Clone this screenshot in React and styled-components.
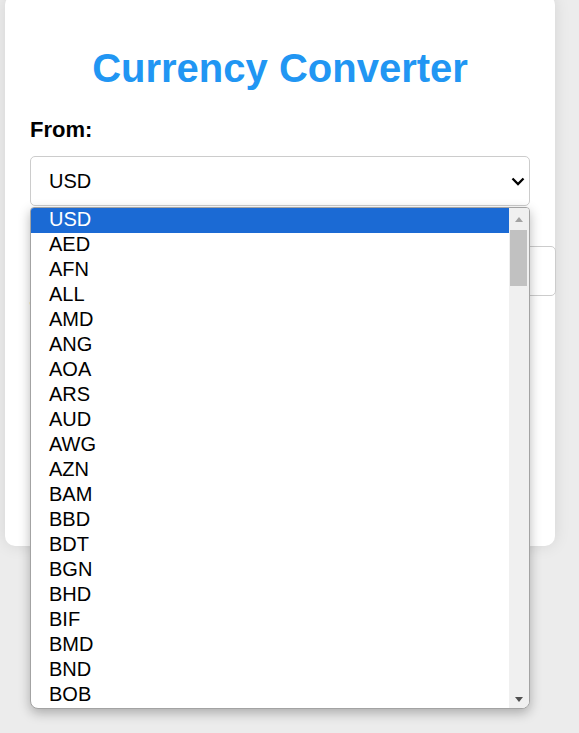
import React from 'react';
import styled, { createGlobalStyle } from 'styled-components';

const Global = createGlobalStyle`
  html, body {
    margin: 0;
    padding: 0;
    background: #ececec;
    font-family: "Liberation Sans", Arial, sans-serif;
  }
  body {
    height: 733px;
    overflow: hidden;
  }
`;

const Page = styled.div`
  padding-left: 5px;
  margin-top: -5px;
`;

const Card = styled.div`
  position: relative;
  width: 550px;
  box-sizing: border-box;
  padding: 25px;
  background: #ffffff;
  border-radius: 10px;
  box-shadow: 0 0 16px rgba(0, 0, 0, 0.1);
`;

const Title = styled.h1`
  margin: 25px 0 27px;
  font-size: 40px;
  line-height: 46px;
  font-weight: bold;
  color: #2196f3;
  text-align: center;
`;

const Field = styled.div`
  display: flex;
  flex-direction: column;
  margin-bottom: 2px;
`;

const Label = styled.label`
  display: block;
  font-size: 22px;
  line-height: 24px;
  font-weight: bold;
  color: #000;
  margin-bottom: 14px;
`;

const SelectWrap = styled.div`
  position: relative;
  width: 100%;
`;

const Select = styled.select`
  appearance: none;
  -webkit-appearance: none;
  width: 100%;
  height: 50px;
  box-sizing: border-box;
  padding: 0 36px 0 18px;
  font-family: "Liberation Sans", Arial, sans-serif;
  font-size: 20px;
  color: #000;
  background: #fff;
  border: 1px solid #ccc;
  border-radius: 5px;
`;

const Chevron = styled.svg`
  position: absolute;
  right: 5px;
  top: 21px;
  width: 14px;
  height: 9px;
  pointer-events: none;
`;

const Input = styled.input`
  width: 100%;
  height: 24px;
  padding: 12px;
  font-family: "Liberation Sans", Arial, sans-serif;
  font-size: 20px;
  border: 1px solid #ccc;
  border-radius: 5px;
  background: #fff;
`;

const Button = styled.button`
  width: 100%;
  height: 40px;
  margin-top: 14px;
  border: none;
  border-radius: 5px;
  background: #2196f3;
  color: #fff;
  font-family: "Liberation Sans", Arial, sans-serif;
  font-size: 20px;
`;

const Result = styled.div`
  margin-top: 30px;
  padding: 12px;
  border: 1px solid #ddd;
  border-radius: 5px;
  background: #f9f9f9;
  font-size: 20px;
  line-height: 23px;
  text-align: center;
`;

const ListBox = styled.div`
  position: absolute;
  top: 51px;
  left: 0;
  width: 500px;
  height: 502px;
  box-sizing: border-box;
  display: flex;
  background: #fff;
  border: 1px solid #a3a3a3;
  border-radius: 4px 4px 8px 8px;
  overflow: hidden;
  box-shadow: 0 4px 12px rgba(0, 0, 0, 0.28);
  z-index: 10;
`;

const Options = styled.ul`
  flex: 1;
  margin: 0;
  padding: 0;
  list-style: none;
`;

const Option = styled.li`
  height: 25px;
  box-sizing: border-box;
  padding: 0 0 3px 18px;
  font-size: 20px;
  line-height: 22px;
  color: ${(p) => (p.$selected ? '#ffffff' : '#000000')};
  background: ${(p) => (p.$selected ? '#1b6ad4' : 'transparent')};
`;

const Track = styled.div`
  width: 20px;
  display: flex;
  flex-direction: column;
  align-items: center;
  background: #f0f0f0;
`;

const ArrowZone = styled.div`
  height: ${(p) => p.$h}px;
  width: 100%;
  display: flex;
  align-items: ${(p) => (p.$down ? 'flex-start' : 'center')};
  justify-content: center;
  padding-top: ${(p) => (p.$down ? 6 : 0)}px;
  box-sizing: border-box;
`;

const Triangle = styled.span`
  width: 0;
  height: 0;
  margin-left: -1px;
  border-left: 4.5px solid transparent;
  border-right: 4.5px solid transparent;
  ${(p) =>
    p.$down
      ? `border-top: 5px solid ${p.$color};`
      : `border-bottom: 5px solid ${p.$color};`}
`;

const Thumb = styled.div`
  width: 17px;
  height: 56px;
  margin-left: -2px;
  background: #c1c1c1;
`;

const Spacer = styled.div`
  flex: 1;
`;

const CURRENCIES = [
  'USD', 'AED', 'AFN', 'ALL', 'AMD', 'ANG', 'AOA', 'ARS', 'AUD', 'AWG',
  'AZN', 'BAM', 'BBD', 'BDT', 'BGN', 'BHD', 'BIF', 'BMD', 'BND', 'BOB',
  'BRL', 'BSD', 'BTN', 'BWP', 'BYN', 'BZD', 'CAD', 'CDF', 'CHF', 'CLP',
  'CNY', 'COP', 'CRC', 'CUP', 'CVE', 'CZK', 'DJF', 'DKK', 'DOP', 'DZD',
  'EGP', 'ERN', 'ETB', 'EUR', 'FJD', 'GBP', 'INR', 'JPY', 'KRW', 'MXN',
];

const VISIBLE = CURRENCIES.slice(0, 20);

function CurrencySelect({ value, children }) {
  return (
    <SelectWrap>
      <Select defaultValue={value}>
        {CURRENCIES.map((c) => (
          <option key={c} value={c}>{c}</option>
        ))}
      </Select>
      <Chevron viewBox="0 0 14 9">
        <path d="M1.5 1.5 L7 7 L12.5 1.5" fill="none" stroke="#000" strokeWidth="2.3" />
      </Chevron>
      {children}
    </SelectWrap>
  );
}

export default function App() {
  return (
    <>
      <Global />
      <Page>
        <Card>
          <Title>Currency Converter</Title>
          <Field>
            <Label>From:</Label>
            <CurrencySelect value="USD">
              <ListBox>
                <Options>
                  {VISIBLE.map((c, i) => (
                    <Option key={c} $selected={i === 0}>{c}</Option>
                  ))}
                </Options>
                <Track>
                  <ArrowZone $h={22}>
                    <Triangle $color="#a3a3a3" />
                  </ArrowZone>
                  <Thumb />
                  <Spacer />
                  <ArrowZone $h={17} $down>
                    <Triangle $down $color="#505050" />
                  </ArrowZone>
                </Track>
              </ListBox>
            </CurrencySelect>
          </Field>
          <Field>
            <Label>Amount:</Label>
            <Input type="number" defaultValue="1" />
          </Field>
          <Field>
            <Label>To:</Label>
            <CurrencySelect value="EUR" />
          </Field>
          <Button>Convert</Button>
          <Result>1 USD = 0.92 EUR</Result>
        </Card>
      </Page>
    </>
  );
}
